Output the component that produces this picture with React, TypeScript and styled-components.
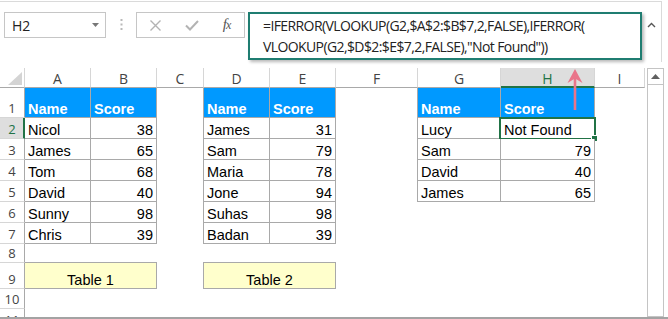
import React from 'react';
import styled, { createGlobalStyle, css } from 'styled-components';

const Global = createGlobalStyle`
  html, body { margin: 0; padding: 0; background: #fff; }
  body { width: 668px; height: 319px; overflow: hidden; font-family: "Liberation Sans", Arial, sans-serif; }
`;

const UI_FONT = `"Open Sans", "Noto Sans", sans-serif`;
const GREEN = '#217346';
const GRID = '#a9a9a9';
const LIGHT = '#d6d6d6';

const Frame = styled.div`
  width: 668px;
  height: 319px;
  overflow: hidden;
  background: #fff;
  display: flex;
  flex-direction: column;
`;

const FormulaBar = styled.div`
  margin-top: 1px;
  height: 61px;
  width: 662px;
  box-sizing: border-box;
  border-top: 1px solid #dadada;
  border-right: 1px solid #dadada;
  display: flex;
  align-items: flex-start;
  padding: 10px 0 0 4px;
  flex-shrink: 0;
`;

const NameBox = styled.div`
  width: 102px;
  height: 26px;
  box-sizing: border-box;
  border: 1px solid #c6c6c6;
  display: flex;
  align-items: center;
  justify-content: space-between;
  padding: 0 6px 0 7px;
  font-family: ${UI_FONT};
  font-size: 14px;
  color: #222;
`;

const Grip = styled.div`
  width: 30px;
  height: 26px;
  display: flex;
  align-items: center;
  justify-content: center;
`;

const FnButtons = styled.div`
  width: 109px;
  height: 26px;
  box-sizing: border-box;
  border: 1px solid #c6c6c6;
  display: grid;
  grid-template-columns: 37px 35px 35px;
  align-items: center;
  justify-items: center;
`;

const Fx = styled.span`
  font-family: "Liberation Serif", "DejaVu Serif", serif;
  font-style: italic;
  font-size: 15px;
  color: #555;
  letter-spacing: -1px;
  margin-top: -2px;
  & > small { font-size: 12px; }
`;

const FormulaBox = styled.div`
  margin-left: 3px;
  width: 394px;
  height: 48px;
  box-sizing: border-box;
  border: 2px solid #1f7d71;
  box-shadow: 2px 2px 3px rgba(0, 0, 0, 0.28);
  padding: 1px 0 0 13px;
  font-family: ${UI_FONT};
  font-size: 14px;
  letter-spacing: -0.6px;
  line-height: 21px;
  color: #222;
  white-space: pre;
`;

const Expand = styled.div`
  flex: 1;
  display: flex;
  justify-content: center;
  padding-top: 10px;
`;

const SheetArea = styled.div`
  position: relative;
  margin-top: 6px;
  height: 249px;
  display: flex;
  align-items: stretch;
  flex-shrink: 0;
`;

const Sheet = styled.div`
  display: grid;
  grid-template-columns: 25px 66px 66px 47px 66px 66px 82px 83px 94px 50px;
  grid-template-rows: 20px 30px repeat(6, 21px) 19px 26px 20px 8px;
  width: 645px;
  overflow: hidden;
`;

type Pos = { $r: number; $c: number; $span?: number };

const place = css<Pos>`
  grid-row: ${(p) => p.$r + 1};
  grid-column: ${(p) => p.$c + 1} / span ${(p) => p.$span ?? 1};
  box-sizing: border-box;
  min-width: 0;
  overflow: hidden;
`;

const Corner = styled.div<Pos>`
  ${place}
  border-right: 1px solid ${LIGHT};
  border-bottom: 1px solid ${GRID};
  display: flex;
  align-items: flex-end;
  justify-content: flex-end;
  padding: 0 2px 2px 0;
`;

const ColHead = styled.div<Pos & { $active?: boolean }>`
  ${place}
  display: flex;
  align-items: center;
  justify-content: center;
  font-family: ${UI_FONT};
  font-size: 14px;
  color: ${(p) => (p.$active ? GREEN : '#444')};
  background: ${(p) => (p.$active ? '#dedede' : '#fff')};
  border-right: 1px solid ${LIGHT};
  border-bottom: ${(p) => (p.$active ? `2px solid ${GREEN}` : `1px solid ${GRID}`)};
  padding-top: 2px;
`;

const RowHead = styled.div<Pos & { $active?: boolean; $clipped?: boolean }>`
  ${place}
  display: flex;
  align-items: ${(p) => (p.$clipped ? 'flex-start' : 'flex-end')};
  justify-content: center;
  font-family: ${UI_FONT};
  font-size: 13px;
  line-height: 17px;
  color: ${(p) => (p.$active ? GREEN : '#444')};
  background: ${(p) => (p.$active ? '#dedede' : '#fff')};
  border-right: ${(p) => (p.$active ? `2px solid ${GREEN}` : `1px solid ${GRID}`)};
  border-bottom: ${(p) => (p.$clipped ? 'none' : `1px solid ${LIGHT}`)};
  padding-left: ${(p) => (p.$active ? '1px' : '0')};
  padding-top: ${(p) => (p.$clipped ? '3px' : '0')};
`;

type CellKind = 'head' | 'data' | 'label';

const Cell = styled.div<
  Pos & { $kind: CellKind; $align?: 'left' | 'right' | 'center'; $edge?: boolean }
>`
  ${place}
  position: relative;
  overflow: visible;
  display: flex;
  align-items: flex-end;
  justify-content: ${(p) =>
    p.$align === 'right' ? 'flex-end' : p.$align === 'center' ? 'center' : 'flex-start'};
  padding: 0 3px;
  font-size: 14.5px;
  line-height: 16px;
  white-space: nowrap;
  color: ${(p) => (p.$kind === 'head' ? '#fff' : '#000')};
  font-weight: ${(p) => (p.$kind === 'head' ? 700 : 400)};
  background: ${(p) =>
    p.$kind === 'head' ? '#0099ff' : p.$kind === 'label' ? '#ffffcc' : '#fff'};
  border-right: 1px solid ${GRID};
  border-bottom: 1px solid ${GRID};
  box-shadow: ${(p) =>
    p.$kind === 'label'
      ? `${p.$edge ? `-1px 0 0 ${GRID}, -1px -1px 0 ${GRID}, ` : ''}0 -1px 0 ${GRID}`
      : p.$edge
      ? `-1px 0 0 ${GRID}`
      : 'none'};
`;

const Selection = styled.div`
  position: absolute;
  left: -2px;
  top: -1px;
  right: -2px;
  bottom: -2px;
  border: 2px solid ${GREEN};
  pointer-events: none;
`;

const Handle = styled.div`
  position: absolute;
  right: -4px;
  bottom: -4px;
  width: 5px;
  height: 5px;
  background: ${GREEN};
  border: 1px solid #fff;
`;

const ScrollBar = styled.div`
  margin-left: 2px;
  width: 17px;
  box-sizing: border-box;
  border: 1px solid #c4c4c4;
  display: flex;
  flex-direction: column;
`;

const ScrollBtn = styled.div`
  height: 16px;
  box-sizing: border-box;
  border-bottom: 1px solid #c4c4c4;
  display: flex;
  align-items: center;
  justify-content: center;
`;

const Arrow = styled.svg`
  position: absolute;
  left: 566px;
  top: 0;
`;

const BottomLine = styled.div`
  height: 2px;
  background: #a3a3a3;
  flex-shrink: 0;
`;

const COLS = ['A', 'B', 'C', 'D', 'E', 'F', 'G', 'H', 'I'];

type Table = { col: number; rows: [string, string][] };

const tables: Table[] = [
  {
    col: 1,
    rows: [
      ['Nicol', '38'],
      ['James', '65'],
      ['Tom', '68'],
      ['David', '40'],
      ['Sunny', '98'],
      ['Chris', '39'],
    ],
  },
  {
    col: 4,
    rows: [
      ['James', '31'],
      ['Sam', '79'],
      ['Maria', '78'],
      ['Jone', '94'],
      ['Suhas', '98'],
      ['Badan', '39'],
    ],
  },
  {
    col: 7,
    rows: [
      ['Lucy', 'Not Found'],
      ['Sam', '79'],
      ['David', '40'],
      ['James', '65'],
    ],
  },
];

export default function App() {
  return (
    <>
      <Global />
      <Frame>
        <FormulaBar>
          <NameBox>
            <span>H2</span>
            <svg width="7" height="4" viewBox="0 0 7 4">
              <path d="M0 0 H7 L3.5 4 Z" fill="#777" />
            </svg>
          </NameBox>
          <Grip>
            <svg width="3" height="12" viewBox="0 0 3 12">
              <rect x="0.5" y="0" width="2" height="2" fill="#b9b9b9" />
              <rect x="0.5" y="4.5" width="2" height="2" fill="#b9b9b9" />
              <rect x="0.5" y="9" width="2" height="2" fill="#b9b9b9" />
            </svg>
          </Grip>
          <FnButtons>
            <svg width="11" height="11" viewBox="0 0 11 11">
              <path d="M0.5 0.5 L10.5 10.5 M10.5 0.5 L0.5 10.5" stroke="#b3b3b3" strokeWidth="1.4" fill="none" />
            </svg>
            <svg width="14" height="11" viewBox="0 0 14 11">
              <path d="M1 5.5 L5 9.5 L13 1" stroke="#b3b3b3" strokeWidth="2" fill="none" />
            </svg>
            <Fx>
              f<small>x</small>
            </Fx>
          </FnButtons>
          <FormulaBox>
            {'=IFERROR(VLOOKUP(G2,$A$2:$B$7,2,FALSE),IFERROR(\nVLOOKUP(G2,$D$2:$E$7,2,FALSE),"Not Found"))'}
          </FormulaBox>
          <Expand>
            <svg width="9" height="6" viewBox="0 0 9 6">
              <path d="M1 5 L4.5 1.5 L8 5" stroke="#555" strokeWidth="1.4" fill="none" />
            </svg>
          </Expand>
        </FormulaBar>

        <SheetArea>
          <Sheet>
            <Corner $r={0} $c={0}>
              <svg width="14" height="13" viewBox="0 0 14 13">
                <path d="M14 0 V13 H0 Z" fill="#d4d4d4" />
              </svg>
            </Corner>
            {COLS.map((c, i) => (
              <ColHead key={c} $r={0} $c={i + 1} $active={c === 'H'}>
                {c}
              </ColHead>
            ))}
            {Array.from({ length: 11 }, (_, i) => (
              <RowHead key={i} $r={i + 1} $c={0} $active={i === 1} $clipped={i === 10}>
                {i + 1}
              </RowHead>
            ))}

            {tables.map((t) => (
              <React.Fragment key={t.col}>
                <Cell $r={1} $c={t.col} $kind="head" $edge={t.col > 1}>
                  Name
                </Cell>
                <Cell $r={1} $c={t.col + 1} $kind="head">
                  Score
                </Cell>
                {t.rows.map(([name, score], i) => {
                  const isSel = t.col === 7 && i === 0;
                  return (
                    <React.Fragment key={i}>
                      <Cell $r={i + 2} $c={t.col} $kind="data" $edge={t.col > 1}>
                        {name}
                      </Cell>
                      <Cell
                        $r={i + 2}
                        $c={t.col + 1}
                        $kind="data"
                        $align={/^\d+$/.test(score) ? 'right' : 'left'}
                      >
                        {score}
                        {isSel && (
                          <Selection>
                            <Handle />
                          </Selection>
                        )}
                      </Cell>
                    </React.Fragment>
                  );
                })}
              </React.Fragment>
            ))}

            <Cell $r={9} $c={1} $span={2} $kind="label" $align="center">
              Table 1
            </Cell>
            <Cell $r={9} $c={4} $span={2} $kind="label" $align="center" $edge>
              Table 2
            </Cell>
          </Sheet>

          <ScrollBar>
            <ScrollBtn>
              <svg width="9" height="5" viewBox="0 0 9 5">
                <path d="M0 5 L4.5 0 L9 5 Z" fill="#606060" />
              </svg>
            </ScrollBtn>
          </ScrollBar>

          <Arrow width="18" height="43" viewBox="0 0 18 43">
            <path d="M9 9 V42" stroke="#e9758a" strokeWidth="2.6" fill="none" />
            <path d="M9 1 L1.5 15 L9 10.5 L16.5 15 Z" fill="#e9758a" />
          </Arrow>
        </SheetArea>
        <BottomLine />
      </Frame>
    </>
  );
}
